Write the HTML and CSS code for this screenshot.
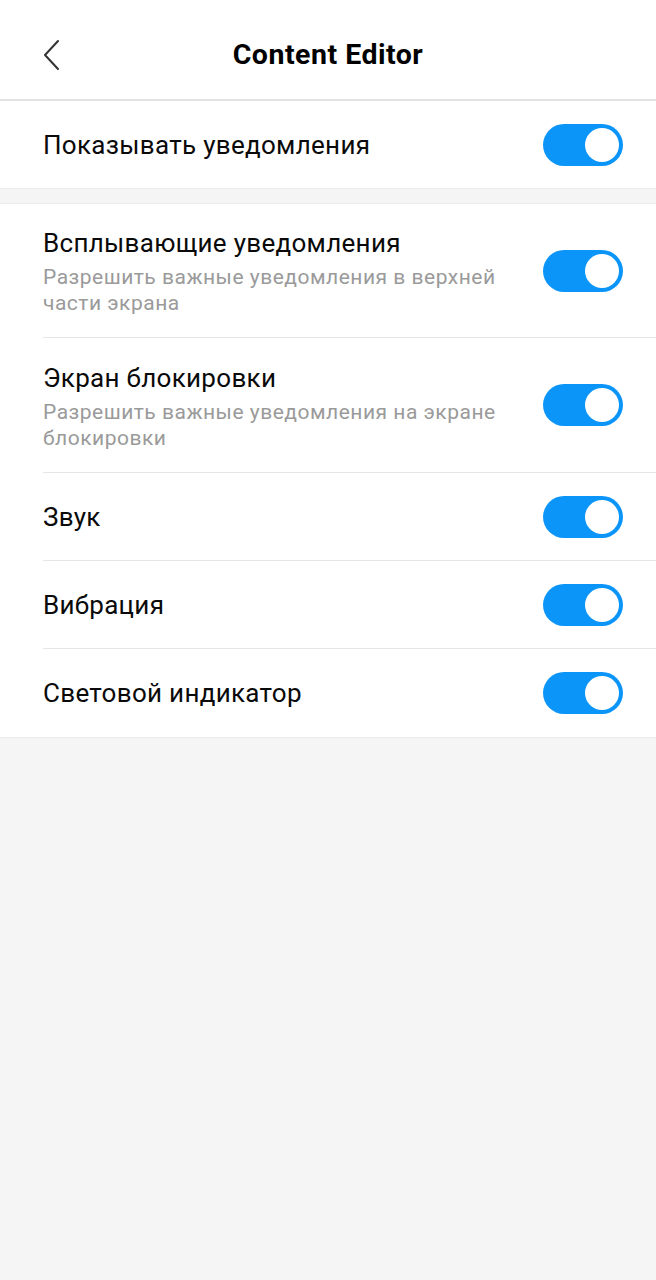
FILE: index.html
```html
<!DOCTYPE html>
<html lang="ru">
<head>
    <meta charset="UTF-8">
    <meta name="viewport" content="width=device-width, initial-scale=1.0">
    <title>Content Editor</title>
    <link rel="stylesheet" href="styles.css">
</head>
<body>
    <header class="topbar">
        <button class="back" aria-label="Назад">
            <svg width="20" height="32" viewBox="0 0 20 32">
                <path d="M16 2 L3 16 L16 30" fill="none" stroke="#333" stroke-width="2" stroke-linecap="round" stroke-linejoin="round"/>
            </svg>
        </button>
        <h1 class="title">Content Editor</h1>
    </header>

    <section class="group">
        <div class="row first">
            <div class="text">
                <div class="label">Показывать уведомления</div>
            </div>
            <span class="toggle on"></span>
        </div>
    </section>

    <div class="spacer"></div>

    <section class="group">
        <div class="row tall">
            <div class="text">
                <div class="label">Всплывающие уведомления</div>
                <div class="hint">Разрешить важные уведомления в верхней части экрана</div>
            </div>
            <span class="toggle on"></span>
        </div>
        <div class="row tall">
            <div class="text">
                <div class="label">Экран блокировки</div>
                <div class="hint">Разрешить важные уведомления на экране блокировки</div>
            </div>
            <span class="toggle on"></span>
        </div>
        <div class="row">
            <div class="text">
                <div class="label">Звук</div>
            </div>
            <span class="toggle on"></span>
        </div>
        <div class="row">
            <div class="text">
                <div class="label">Вибрация</div>
            </div>
            <span class="toggle on"></span>
        </div>
        <div class="row">
            <div class="text">
                <div class="label">Световой индикатор</div>
            </div>
            <span class="toggle on"></span>
        </div>
    </section>
</body>
</html>
```

FILE: styles.css
```css
html, body {
    margin: 0;
    padding: 0;
}
body {
    font-family: Roboto, "Noto Sans", sans-serif;
    background-color: #f5f5f5;
    color: #111;
    min-height: 1280px;
}
.topbar {
    height: 101px;
    padding-top: 10px;
    background-color: #fff;
    border-bottom: 2px solid #e2e2e2;
    display: flex;
    align-items: center;
    justify-content: center;
    position: relative;
    box-sizing: border-box;
}
.back {
    position: absolute;
    left: 42px;
    top: 39px;
    padding: 0;
    border: none;
    background: none;
    line-height: 0;
}
.title {
    margin: 0;
    font-size: 28.5px;
    font-weight: 700;
    color: #000;
    letter-spacing: 0.5px;
}
.group {
    background-color: #fff;
    border-bottom: 1px solid #ebebeb;
}
.spacer {
    height: 14px;
    border-bottom: 1px solid #ebebeb;
}
.row {
    height: 88px;
    margin-left: 43px;
    padding-right: 33px;
    display: flex;
    align-items: center;
    justify-content: space-between;
    border-bottom: 1px solid #e6e6e6;
    box-sizing: border-box;
}
.row.first {
    height: 87px;
}
.row:last-child {
    border-bottom: none;
}
.row.tall {
    height: 134px;
}
.row.tall + .row.tall {
    height: 135px;
}
.text {
    flex: 1;
    padding-right: 40px;
}
.label {
    font-size: 26px;
    line-height: 36px;
    letter-spacing: 0.3px;
    color: #0a0a0a;
}
.hint {
    margin-top: 3px;
    font-size: 21px;
    line-height: 26px;
    letter-spacing: 0.5px;
    color: #9a9a9a;
}
.toggle {
    width: 80px;
    height: 42px;
    border-radius: 21px;
    background-color: #0c95f9;
    position: relative;
    flex-shrink: 0;
}
.toggle::after {
    content: "";
    position: absolute;
    top: 4px;
    right: 4px;
    width: 34px;
    height: 34px;
    border-radius: 50%;
    background-color: #fff;
}
```
